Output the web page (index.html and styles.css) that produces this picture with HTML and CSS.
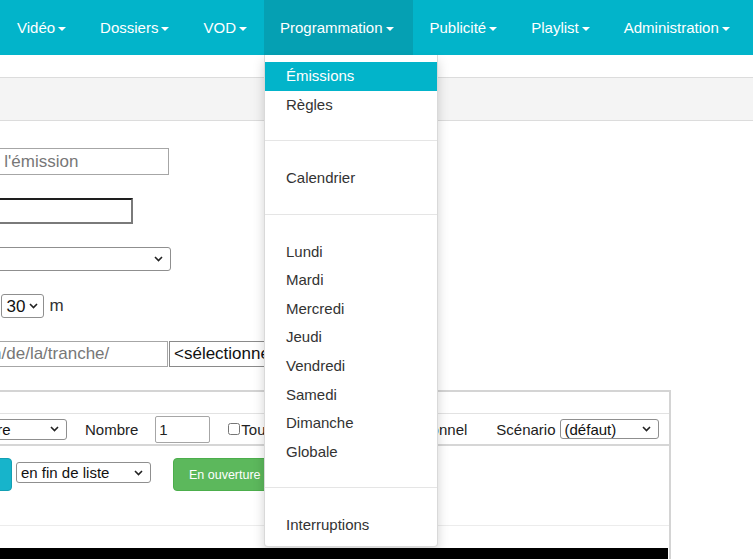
FILE: index.html
```html
<!DOCTYPE html>
<html lang="fr">
<head>
<meta charset="utf-8">
<title>Programmation</title>
<link rel="stylesheet" href="styles.css">
</head>
<body>
<nav class="navbar">
  <ul class="nav">
    <li class="nav-item"><a class="nav-link">Vidéo<span class="caret"></span></a></li>
    <li class="nav-item"><a class="nav-link">Dossiers<span class="caret"></span></a></li>
    <li class="nav-item"><a class="nav-link">VOD<span class="caret"></span></a></li>
    <li class="nav-item active"><a class="nav-link">Programmation<span class="caret"></span></a>
      <ul class="dropdown">
        <li class="dd-item selected">Émissions</li>
        <li class="dd-item">Règles</li>
        <li class="dd-divider"></li>
        <li class="dd-item">Calendrier</li>
        <li class="dd-divider"></li>
        <li class="dd-item">Lundi</li>
        <li class="dd-item">Mardi</li>
        <li class="dd-item">Mercredi</li>
        <li class="dd-item">Jeudi</li>
        <li class="dd-item">Vendredi</li>
        <li class="dd-item">Samedi</li>
        <li class="dd-item">Dimanche</li>
        <li class="dd-item">Globale</li>
        <li class="dd-divider"></li>
        <li class="dd-item">Interruptions</li>
      </ul>
    </li>
    <li class="nav-item"><a class="nav-link">Publicité<span class="caret"></span></a></li>
    <li class="nav-item"><a class="nav-link">Playlist<span class="caret"></span></a></li>
    <li class="nav-item"><a class="nav-link">Administration<span class="caret"></span></a></li>
  </ul>
</nav>
<div class="topgap"></div>
<div class="breadcrumb"></div>
<main class="content">
  <div class="field"><input class="text-input in-name" type="text" placeholder="Nom de l'émission"></div>
  <div class="field"><input class="inset-input" type="text"></div>
  <div class="field"><select class="sel sel-wide"><option></option></select></div>
  <div class="field">
    <select class="sel sel-time"><option>0</option></select>
    <span class="unit">h</span>
    <select class="sel sel-time sel-min"><option>30</option></select>
    <span class="unit">m</span>
  </div>
  <div class="field">
    <input class="text-input in-path" type="text" placeholder="/chemin/de/la/tranche/">
    <button class="pick-btn">&lt;sélectionner&gt;</button>
  </div>
  <section class="panel">
    <div class="panel-head"></div>
    <div class="panel-controls">
      <select class="sel sel-sm sel-genre"><option>Genre</option></select>
      <span class="lbl lbl-nombre">Nombre</span>
      <input class="num-input" type="text" value="1">
      <label class="check"><input type="checkbox" class="cb">Tous les jours, mode exceptionnel</label>
      <span class="lbl lbl-scen">Scénario</span>
      <select class="sel sel-sm sel-scen"><option>(défaut)</option></select>
    </div>
    <div class="panel-actions">
      <button class="btn btn-info">Ajouter</button>
      <select class="sel sel-sm sel-pos"><option>en fin de liste</option></select>
      <button class="btn btn-success">En ouverture</button>
    </div>
    <div class="panel-gap"></div>
    <div class="player"></div>
  </section>
</main>
</body>
</html>
```
FILE: styles.css
```css
html, body {
  margin: 0;
  padding: 0;
  overflow: hidden;
  background: #fff;
}
body {
  width: 753px;
  height: 559px;
  font-family: "Liberation Sans", Arial, Helvetica, sans-serif;
  color: #333;
}

/* Navbar */
.navbar {
  height: 55px;
  background: #02b4ca;
}
.nav {
  display: flex;
  margin: 0;
  padding: 0;
  list-style: none;
}
.nav-item {
  position: relative;
}
.nav-item.active {
  background: #05a0b3;
}
.nav-link {
  display: block;
  padding: 0 17px;
  line-height: 55px;
  font-size: 15px;
  color: #fff;
  white-space: nowrap;
}
.nav-item.active .nav-link {
  padding: 0 19px 0 16px;
}
.caret {
  display: inline-block;
  width: 0;
  height: 0;
  margin-left: 3px;
  vertical-align: middle;
  border-top: 4px solid #fff;
  border-left: 4px solid transparent;
  border-right: 4px solid transparent;
}

/* Dropdown */
.dropdown {
  position: absolute;
  top: 55px;
  left: 0;
  width: 172px;
  margin: 0;
  padding: 7px 0 6px;
  list-style: none;
  background: #fff;
  border: 1px solid rgba(0, 0, 0, 0.15);
  border-top: 0;
  border-radius: 0 0 4px 4px;
  box-shadow: 0 6px 12px rgba(0, 0, 0, 0.175);
  z-index: 10;
}
.dd-item {
  padding: 4px 21px;
  line-height: 20.57px;
  font-size: 15px;
  color: #333;
  white-space: nowrap;
}
.dd-item.selected {
  background: #02b4ca;
  color: #fff;
}
.dd-divider {
  height: 1px;
  margin: 21px 0 23px;
  background: #e5e5e5;
}

/* Sub header */
.topgap {
  height: 22px;
}
.breadcrumb {
  height: 42px;
  background: #f4f4f4;
  border-top: 1px solid #dcdcdc;
  border-bottom: 1px solid #dcdcdc;
}

/* Form */
.content {
  margin-left: -62px;
  padding-top: 27px;
}
.field {
  display: flex;
  align-items: center;
  margin-bottom: 23px;
  font-size: 17px;
}
.text-input {
  box-sizing: border-box;
  margin: 0;
  padding: 0 3px;
  border: 1px solid #a6a6a6;
  font-family: inherit;
  font-size: 17px;
  color: #222;
  background: #fff;
}
.text-input::placeholder {
  color: #777;
}
.in-name {
  width: 231px;
  height: 27px;
  padding-left: 1px;
}
.in-path {
  width: 230px;
  height: 26px;
}
.inset-input {
  box-sizing: border-box;
  width: 195px;
  height: 26px;
  margin: 0;
  border-style: solid;
  border-width: 2px;
  border-color: #1e1e1e #7a7a7a #7a7a7a #1e1e1e;
  background: #fff;
}
.pick-btn {
  box-sizing: border-box;
  height: 26px;
  margin: 0 0 0 1px;
  padding: 0 4px;
  border: 1px solid #8a8a8a;
  background: #fff;
  font-family: inherit;
  font-size: 17px;
  color: #111;
  white-space: nowrap;
}

.sel {
  box-sizing: border-box;
  margin: 0;
  padding: 0 22px 0 4px;
  -webkit-appearance: none;
  appearance: none;
  border: 1px solid #8f8f8f;
  border-radius: 3px;
  background-color: #fff;
  background-image: url("data:image/svg+xml,%3Csvg xmlns='http://www.w3.org/2000/svg' width='9' height='6' viewBox='0 0 9 6'%3E%3Cpath d='M1 1l3.5 3.5L8 1' fill='none' stroke='%23222' stroke-width='1.6'/%3E%3C/svg%3E");
  background-repeat: no-repeat;
  background-position: right 7px center;
  font-family: inherit;
  color: #111;
}
.sel-wide {
  width: 233px;
  height: 24px;
  font-size: 17px;
}
.sel-time {
  width: 44px;
  height: 24px;
  font-size: 17px;
  padding-right: 16px;
  background-position: right 5px center;
}
.sel-min {
  width: 43px;
}
.unit {
  margin: 0 5px;
}

/* Panel */
.panel {
  width: 729px;
  border-top: 2px solid #d4d4d4;
  border-right: 2px solid #d4d4d4;
  border-left: 2px solid #d4d4d4;
}
.panel-head {
  height: 21px;
  border-bottom: 1px solid #e2e2e2;
}
.panel-controls {
  display: flex;
  align-items: center;
  height: 30px;
  border-bottom: 2px solid #d6d6d6;
  font-size: 15px;
  color: #222;
}
.sel-sm {
  height: 21px;
  font-size: 15px;
  padding-left: 4px;
}
.sel-genre {
  width: 103px;
  margin-left: 24px;
}
.lbl-nombre {
  margin-left: 18px;
}
.num-input {
  box-sizing: border-box;
  width: 55px;
  height: 27px;
  margin: 0 0 0 17px;
  padding: 0 3px;
  border: 1px solid #a6a6a6;
  border-radius: 2px;
  font-family: inherit;
  font-size: 15px;
  color: #222;
}
.check {
  display: flex;
  align-items: center;
  margin-left: 18px;
  white-space: nowrap;
}
.cb {
  width: 12px;
  height: 12px;
  margin: 0 1px 0 0;
}
.lbl-scen {
  margin-left: 29px;
}
.sel-scen {
  width: 99px;
  height: 20px;
  margin-left: 4px;
}

.panel-actions {
  display: flex;
  align-items: flex-start;
  height: 67px;
  padding-top: 12px;
  border-bottom: 1px solid #ececec;
}
.btn {
  box-sizing: border-box;
  height: 33px;
  margin: 0;
  padding: 0 15px;
  border: 0;
  border-radius: 4px;
  font-family: inherit;
  font-size: 12.5px;
  color: #fff;
  white-space: nowrap;
}
.btn-info {
  width: 80px;
  margin-left: -8px;
  background: #17b4cb;
  border: 1px solid #139fb3;
}
.sel-pos {
  width: 135px;
  margin: 4px 0 0 4px;
}
.btn-success {
  margin-left: 22px;
  background: #5cb85c;
  border: 1px solid #4cae4c;
}
.panel-gap {
  height: 22px;
}
.player {
  height: 40px;
  margin-right: 1px;
  background: #000;
}
```
